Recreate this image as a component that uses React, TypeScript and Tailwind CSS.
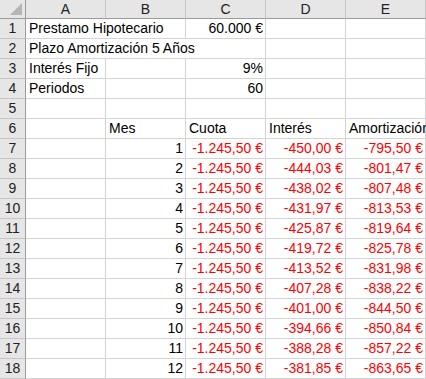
import React from "react";

const interes = ["-450,00", "-444,03", "-438,02", "-431,97", "-425,87", "-419,72", "-413,52", "-407,28", "-401,00", "-394,66", "-388,28", "-381,85"];
const amort = ["-795,50", "-801,47", "-807,48", "-813,53", "-819,64", "-825,78", "-831,98", "-838,22", "-844,50", "-850,84", "-857,22", "-863,65"];

type CellProps = {
  children?: React.ReactNode;
  right?: boolean;
  red?: boolean;
  span?: string;
};

function Cell({ children, right, red, span = "" }: CellProps) {
  return (
    <div
      className={`h-[20px] border-r border-b border-[#d4d4d4] flex items-end pb-[1px] whitespace-nowrap overflow-visible ${
        right ? "justify-end pr-[2px]" : "pl-[3px]"
      } ${red ? "text-[#ff0000]" : "text-black"} ${span}`}
    >
      {children}
    </div>
  );
}

function RowHead({ n }: { n: number }) {
  return (
    <div className="h-[20px] bg-[#e6e6e6] border-r border-r-[#9b9b9b] border-b border-b-[#c6c6c6] flex items-end justify-center pb-[1px] text-[#222]">
      {n}
    </div>
  );
}

export default function App() {
  return (
    <div
      className="w-[426px] h-[379px] overflow-hidden bg-white text-[14px] leading-[17px]"
      style={{ fontFamily: '"Liberation Sans", Arial, sans-serif' }}
    >
      <div className="grid grid-cols-[26px_repeat(5,80px)]">
        {/* column headers */}
        <div className="h-[19px] bg-[#e6e6e6] border-r border-r-[#9b9b9b] border-b border-b-[#9b9b9b] relative">
          <svg className="absolute left-0 top-0" width="25" height="18">
            <polygon points="10,15 22,15 22,3" fill="#b5b5b5" />
          </svg>
        </div>
        {["A", "B", "C", "D", "E"].map((c) => (
          <div
            key={c}
            className="h-[19px] bg-[#e6e6e6] border-r border-r-[#c6c6c6] border-b border-b-[#9b9b9b] flex items-center justify-center text-[#222]"
          >
            {c}
          </div>
        ))}

        <RowHead n={1} />
        <Cell span="col-span-2">Prestamo Hipotecario</Cell>
        <Cell right>60.000 €</Cell>
        <Cell />
        <Cell />

        <RowHead n={2} />
        <Cell span="col-span-3">Plazo Amortización 5 Años</Cell>
        <Cell />
        <Cell />

        <RowHead n={3} />
        <Cell>Interés Fijo</Cell>
        <Cell />
        <Cell right>9%</Cell>
        <Cell />
        <Cell />

        <RowHead n={4} />
        <Cell>Periodos</Cell>
        <Cell />
        <Cell right>60</Cell>
        <Cell />
        <Cell />

        <RowHead n={5} />
        <Cell />
        <Cell />
        <Cell />
        <Cell />
        <Cell />

        <RowHead n={6} />
        <Cell />
        <Cell>Mes</Cell>
        <Cell>Cuota</Cell>
        <Cell>Interés</Cell>
        <Cell>Amortización</Cell>

        {interes.map((v, i) => (
          <React.Fragment key={i}>
            <RowHead n={i + 7} />
            <Cell />
            <Cell right>{i + 1}</Cell>
            <Cell right red>-1.245,50 €</Cell>
            <Cell right red>{v} €</Cell>
            <Cell right red>{amort[i]} €</Cell>
          </React.Fragment>
        ))}
      </div>
    </div>
  );
}
